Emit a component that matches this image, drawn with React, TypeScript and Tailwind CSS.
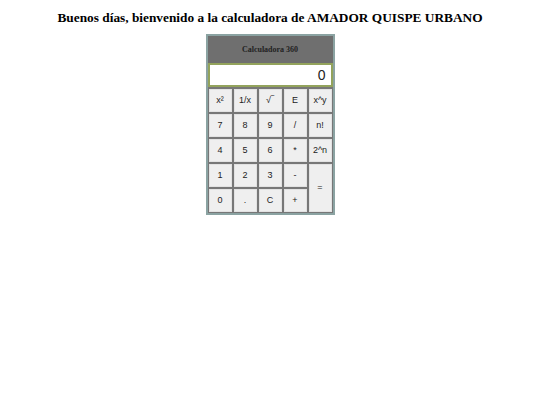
import React from "react";

const Btn = ({ children, className = "" }: { children: React.ReactNode; className?: string }) => (
  <div
    className={
      "flex items-center justify-center bg-[#efefef] border border-[#e2e2e2] text-[9px] text-[#222] " +
      className
    }
    style={{ fontFamily: '"Liberation Sans", Arial, sans-serif' }}
  >
    {children}
  </div>
);

export default function App() {
  return (
    <div className="w-full flex flex-col items-center bg-white" style={{ fontFamily: '"Liberation Serif", "Times New Roman", serif' }}>
      <h1 className="text-[13.33px] font-bold text-black leading-[16px] mt-[10px]">
        Buenos días, bienvenido a la calculadora de AMADOR QUISPE URBANO
      </h1>
      <div className="mt-[8px] w-[129px] border-2 border-[#8ba3a2] bg-[#777777] pb-[1px]">
        <div className="h-[27px] bg-[#6f6f6f] flex items-center justify-center">
          <span className="text-[8px] font-bold text-[#222]">Calculadora 360</span>
        </div>
        <div
          className="h-[24px] bg-white border-2 border-[#93a35c] flex items-center justify-end pr-[5px] text-[14px] text-[#222]"
          style={{ fontFamily: '"Liberation Sans", Arial, sans-serif' }}
        >
          0
        </div>
        <div className="mt-[2px] mx-[1px] grid grid-cols-[repeat(5,23px)] grid-rows-[repeat(5,23px)] gap-[2px]">
          <Btn>x²</Btn>
          <Btn>1/x</Btn>
          <Btn>√‾</Btn>
          <Btn>E</Btn>
          <Btn>x^y</Btn>
          <Btn>7</Btn>
          <Btn>8</Btn>
          <Btn>9</Btn>
          <Btn>/</Btn>
          <Btn>n!</Btn>
          <Btn>4</Btn>
          <Btn>5</Btn>
          <Btn>6</Btn>
          <Btn>*</Btn>
          <Btn>2^n</Btn>
          <Btn>1</Btn>
          <Btn>2</Btn>
          <Btn>3</Btn>
          <Btn>-</Btn>
          <Btn className="row-span-2">=</Btn>
          <Btn>0</Btn>
          <Btn>.</Btn>
          <Btn>C</Btn>
          <Btn>+</Btn>
        </div>
      </div>
    </div>
  );
}
